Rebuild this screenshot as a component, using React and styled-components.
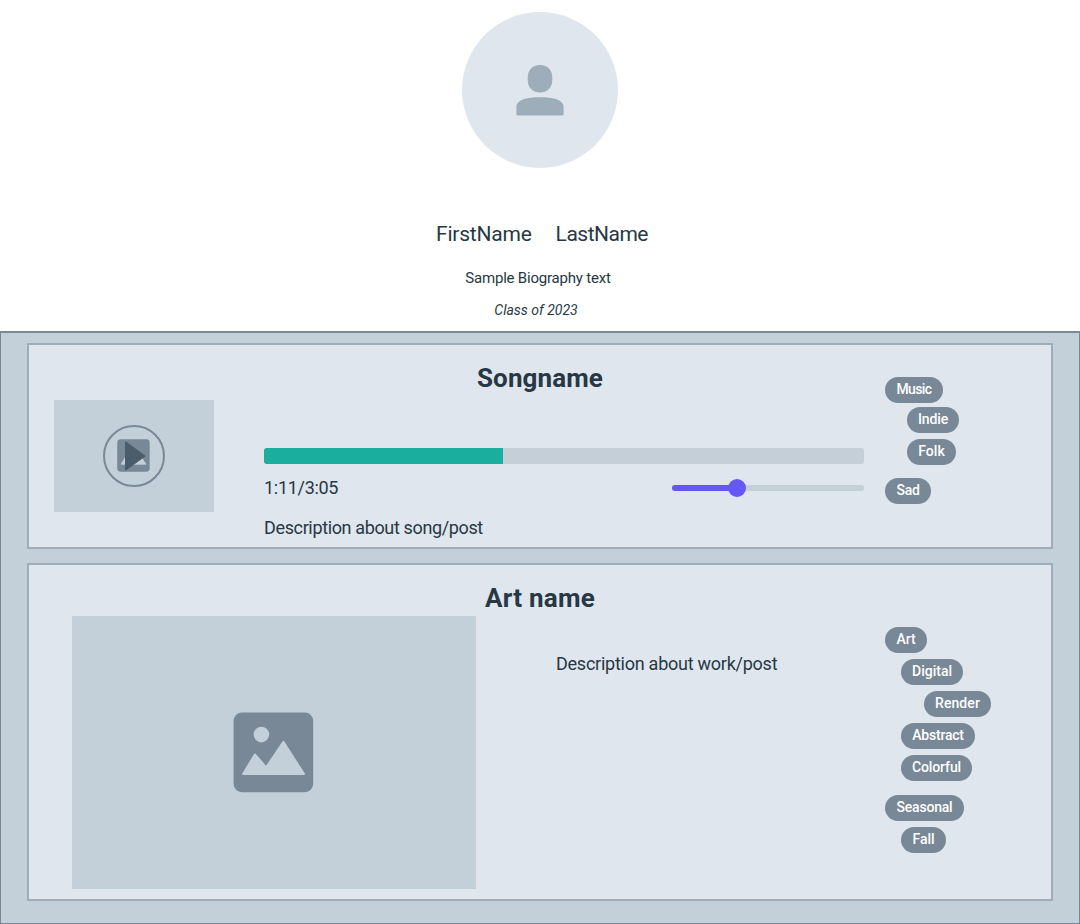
import React from "react";
import styled, { createGlobalStyle } from "styled-components";

const GlobalStyle = createGlobalStyle`
  * { box-sizing: border-box; }
  body {
    margin: 0;
    background: #ffffff;
    color: #273845;
    font-family: Roboto, "Liberation Sans", sans-serif;
  }
`;

const Page = styled.div`
  width: 1080px;
  height: 924px;
  display: flex;
  flex-direction: column;
  overflow: hidden;
`;

const Profile = styled.header`
  height: 331px;
  flex: none;
  padding-top: 12px;
  display: flex;
  flex-direction: column;
  align-items: center;
`;

const Avatar = styled.div`
  width: 156px;
  height: 156px;
  flex: none;
  border-radius: 50%;
  background: #dfe6ee;
  display: flex;
  align-items: center;
  justify-content: center;
`;

const FullName = styled.h1`
  width: 212px;
  margin: 54px 0 0 4px;
  display: flex;
  justify-content: space-between;
  font-size: 21px;
  font-weight: 400;
  line-height: 24px;
`;

const NamePart = styled.span`
  letter-spacing: ${(p) => p.$spacing};
`;

const Bio = styled.p`
  margin: 23px 4px 0 0;
  font-size: 15px;
  line-height: 18px;
  letter-spacing: -0.2px;
  white-space: nowrap;
`;

const ClassYear = styled.p`
  margin: 15px 8px 0 0;
  font-size: 14px;
  font-style: italic;
  line-height: 16px;
  white-space: nowrap;
`;

const Feed = styled.main`
  flex: 1;
  padding: 10px 26px 0;
  border: 1px solid #788896;
  border-top-width: 2px;
  background: #c3cfd9;
  display: flex;
  flex-direction: column;
  gap: 14px;
`;

const Card = styled.article`
  height: ${(p) => p.$height}px;
  flex: none;
  border: 2px solid #9dadb9;
  background: #dfe6ee;
  display: grid;
  grid-template-columns: ${(p) => p.$media}px ${(p) => 856 - p.$media}px 1fr;
  grid-template-rows: ${(p) => p.$head}px 1fr;
`;

const Title = styled.h2`
  grid-area: 1 / 1 / 2 / -1;
  margin: 19px 0 0;
  text-align: center;
  font-size: 26px;
  font-weight: 700;
  line-height: 28px;
  letter-spacing: ${(p) => p.$spacing};
`;

const Media = styled.div`
  grid-area: 2 / 1 / 3 / 2;
  width: ${(p) => p.$width}px;
  height: ${(p) => p.$height}px;
  margin-left: ${(p) => p.$left}px;
  background: #c3cfd9;
  display: flex;
  align-items: center;
  justify-content: center;
`;

const PlayButton = styled.div`
  width: 62px;
  height: 62px;
  border: 2px solid #788896;
  border-radius: 50%;
  display: grid;
  place-items: center;

  > svg { grid-area: 1 / 1; }
`;

const Details = styled.div`
  grid-area: 2 / 2 / 3 / 3;
  padding-top: ${(p) => p.$top}px;
`;

const Progress = styled.div`
  width: 600px;
  height: 16px;
  border-radius: 3px;
  background: #c4cfd8;
  overflow: hidden;
`;

const ProgressFill = styled.div`
  width: 239px;
  height: 100%;
  background: #1aae9f;
`;

const Controls = styled.div`
  width: 600px;
  height: 24px;
  margin-top: 12px;
  display: flex;
  align-items: center;
  justify-content: space-between;
`;

const Text = styled.p`
  margin: ${(p) => p.$top || 0}px 0 0;
  font-size: 18px;
  line-height: 24px;
  letter-spacing: ${(p) => p.$spacing || "0"};
  white-space: nowrap;
`;

const Slider = styled.div`
  width: 192px;
  height: 18px;
  display: flex;
  align-items: center;
`;

const Track = styled.div`
  height: 6px;
  width: ${(p) => (p.$filled ? "56px" : "auto")};
  flex: ${(p) => (p.$filled ? "none" : "1")};
  border-radius: ${(p) => (p.$filled ? "3px 0 0 3px" : "0 3px 3px 0")};
  background: ${(p) => (p.$filled ? "#6558f5" : "#c4cfd8")};
  box-shadow: ${(p) => (p.$filled ? "2px 0 #6558f5" : "-2px 0 #c4cfd8")};
`;

const Thumb = styled.div`
  z-index: 1;
  width: 18px;
  height: 18px;
  border-radius: 50%;
  background: #6558f5;
`;

const Tags = styled.div`
  grid-area: 1 / 3 / 3 / 4;
  padding-top: ${(p) => p.$top}px;
  display: flex;
  flex-direction: column;
  align-items: flex-start;
`;

const Tag = styled.span`
  width: ${(p) => p.$width}px;
  height: 26px;
  margin: ${(p) => p.$gap ?? 6}px 0 0 ${(p) => p.$indent || 0}px;
  border-radius: 13px;
  background: #788896;
  color: #ffffff;
  display: flex;
  justify-content: center;
  font-size: 14px;
  font-weight: 500;
  line-height: 25px;
  letter-spacing: ${(p) => p.$spacing ?? 0}px;
`;

const PersonIcon = () => (
  <svg width="48" height="51" viewBox="0 0 48 51" fill="#9dadb9">
    <path d="M24 0C31.6 0 36.3 5.4 36.3 12.6V14.9C36.3 22.2 31.2 27.5 24 27.5S11.7 22.2 11.7 14.9V12.6C11.7 5.4 16.4 0 24 0Z" />
    <path d="M24 32.3C36.5 32.3 47.6 34.5 47.6 42V49.4Q47.6 50.4 46.6 50.4H1.4Q.4 50.4 .4 49.4V42C.4 34.5 11.5 32.3 24 32.3Z" />
  </svg>
);

const Picture = styled.svg`
  width: ${(p) => p.$size}px;
  height: ${(p) => p.$size}px;
  margin: 0 1px 1px 0;
`;

const ImageIcon = ({ size }) => (
  <Picture $size={size} viewBox="0 0 81 81">
    <rect x=".6" y=".6" width="79.6" height="79.6" rx="8.5" fill="#788896" />
    <g fill="#c3cfd9" stroke="#c3cfd9" strokeLinejoin="round">
      <circle cx="28.4" cy="22.6" r="7.8" stroke="none" />
      <path strokeWidth="2" d="M10.1 61.9L21.9 42.5L33.2 55.3L50.4 29.9L70.9 61.9Z" />
    </g>
  </Picture>
);

const PlayIcon = () => (
  <svg width="58" height="58" viewBox="0 0 58 58">
    <path d="M20.6 15L39.8 29L20.6 43Z" fill="#4b5c6b" stroke="#4b5c6b" strokeWidth="1.2" strokeLinejoin="round" />
  </svg>
);

const songTags = [
  { label: "Music", width: 58, gap: 0, spacing: -0.6 },
  { label: "Indie", width: 52, gap: 4, indent: 22, spacing: -0.1 },
  { label: "Folk", width: 49, indent: 22 },
  { label: "Sad", width: 46, gap: 13, spacing: -0.3 },
];

const artTags = [
  { label: "Art", width: 42, gap: 0 },
  { label: "Digital", width: 62, indent: 16 },
  { label: "Render", width: 67, indent: 39, spacing: 0.1 },
  { label: "Abstract", width: 74, indent: 16, spacing: -0.2 },
  { label: "Colorful", width: 71, indent: 16, spacing: -0.1 },
  { label: "Seasonal", width: 79, gap: 14, spacing: -0.2 },
  { label: "Fall", width: 45, indent: 16, spacing: -0.1 },
];

const TagList = ({ tags, top }) => (
  <Tags $top={top}>
    {tags.map((t) => (
      <Tag key={t.label} $width={t.width} $gap={t.gap} $indent={t.indent} $spacing={t.spacing}>
        {t.label}
      </Tag>
    ))}
  </Tags>
);

export default function App() {
  return (
    <Page>
      <GlobalStyle />
      <Profile>
        <Avatar><PersonIcon /></Avatar>
        <FullName>
          <NamePart $spacing="-0.2px">FirstName</NamePart>
          <NamePart $spacing="-0.5px">LastName</NamePart>
        </FullName>
        <Bio>Sample Biography text</Bio>
        <ClassYear>Class of 2023</ClassYear>
      </Profile>
      <Feed>
        <Card $height={206} $media={235} $head={55}>
          <Title $spacing="0.1px">Songname</Title>
          <Media $width={160} $height={112} $left={25}>
            <PlayButton>
              <ImageIcon size={33} />
              <PlayIcon />
            </PlayButton>
          </Media>
          <Details $top={48}>
            <Progress><ProgressFill /></Progress>
            <Controls>
              <Text $spacing="-0.3px">1:11/3:05</Text>
              <Slider><Track $filled /><Thumb /><Track /></Slider>
            </Controls>
            <Text $top={16} $spacing="-0.36px">Description about song/post</Text>
          </Details>
          <TagList tags={songTags} top={32} />
        </Card>
        <Card $height={338} $media={527} $head={51}>
          <Title $spacing="0.25px">Art name</Title>
          <Media $width={404} $height={273} $left={43}>
            <ImageIcon size={81} />
          </Media>
          <Details $top={36}>
            <Text $spacing="-0.25px">Description about work/post</Text>
          </Details>
          <TagList tags={artTags} top={62} />
        </Card>
      </Feed>
    </Page>
  );
}
